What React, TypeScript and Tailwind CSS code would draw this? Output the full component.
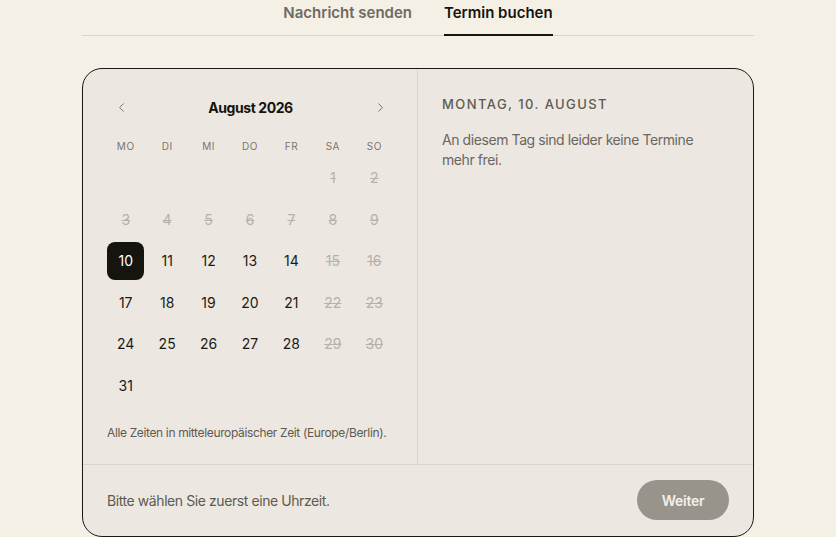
import React from "react";
import { ChevronLeft, ChevronRight } from "lucide-react";

const weekdays = ["Mo", "Di", "Mi", "Do", "Fr", "Sa", "So"];

// August 2026 starts on a Saturday -> 5 empty cells
const days: (number | null)[] = [null, null, null, null, null, ...Array.from({ length: 31 }, (_, i) => i + 1)];

function isDisabled(d: number) {
  const dow = (d + 4) % 7; // 0 = Mo
  return d < 10 || dow === 5 || dow === 6;
}

function DayCell({ day }: { day: number | null }) {
  if (day === null) return <div className="h-[38px]" />;
  const selected = day === 10;
  const disabled = isDisabled(day);
  return (
    <button
      className={
        selected
          ? "h-[38px] rounded-lg bg-[#16140f] text-[14px] text-white"
          : disabled
          ? "h-[38px] rounded-lg text-[14px] text-[#b6b1a9] line-through"
          : "h-[38px] rounded-lg text-[14px] text-[#1c1a16]"
      }
    >
      {day}
    </button>
  );
}

function Calendar() {
  return (
    <div className="border-r border-[#d9d4cc] px-6 pt-6 pb-[22px]">
      <div className="flex h-[30px] items-center justify-between">
        <button className="flex h-7 w-7 items-center justify-center text-[#6f6a62]">
          <ChevronLeft size={15} strokeWidth={1.5} />
        </button>
        <div className="text-[14px] font-bold tracking-[-0.03em] text-[#16140f]">August 2026</div>
        <button className="-mr-px flex h-7 w-7 items-center justify-center text-[#6f6a62]">
          <ChevronRight size={15} strokeWidth={1.5} />
        </button>
      </div>
      <div className="mt-[16px] grid grid-cols-7 gap-x-1">
        {weekdays.map((w) => (
          <div key={w} className="text-center text-[10px] uppercase tracking-wider text-[#7a756d]">
            {w}
          </div>
        ))}
      </div>
      <div className="mt-[5px] grid grid-cols-7 gap-x-1 gap-y-[3.6px]">
        {days.map((d, i) => (
          <DayCell key={i} day={d} />
        ))}
      </div>
      <p className="mt-[20px] text-[12px] tracking-[-0.03em] text-[#5f5a52]">
        Alle Zeiten in mitteleuropäischer Zeit (Europe/Berlin).
      </p>
    </div>
  );
}

export default function App() {
  return (
    <div className="min-h-screen bg-[#f4f0e6] font-['Inter',sans-serif]">
      <div className="mx-auto w-[672px]">
        <div className="flex justify-center gap-8 border-b border-[#d9d4cc]">
          <button className="pb-[10px] pt-[2px] text-[15px] font-semibold text-[#6f6a62]">
            Nachricht senden
          </button>
          <button className="-mb-px border-b-2 border-[#16140f] pb-[9px] pt-[2px] text-[15px] font-semibold text-[#16140f]">
            Termin buchen
          </button>
        </div>
        <div className="mt-8 overflow-hidden rounded-[20px] border border-[#1a1814] bg-[#ece8e1]">
          <div className="grid grid-cols-2">
            <Calendar />
            <div className="px-6 pt-[26px]">
              <div className="text-[13px] font-medium uppercase tracking-[0.11em] text-[#5f5a52]">
                Montag, 10. August
              </div>
              <p className="mt-4 max-w-[265px] text-[14px] leading-5 tracking-[-0.03em] text-[#6b665e]">
                An diesem Tag sind leider keine Termine mehr frei.
              </p>
            </div>
          </div>
          <div className="flex items-center justify-between border-t border-[#d9d4cc] px-6 pt-[15px] pb-4">
            <p className="text-[14px] tracking-[-0.03em] text-[#5f5a52]">Bitte wählen Sie zuerst eine Uhrzeit.</p>
            <button className="h-10 w-[92px] rounded-full bg-[#98948c] text-[14px] font-semibold tracking-[-0.02em] text-[#f4f0e6]">
              Weiter
            </button>
          </div>
        </div>
      </div>
    </div>
  );
}
